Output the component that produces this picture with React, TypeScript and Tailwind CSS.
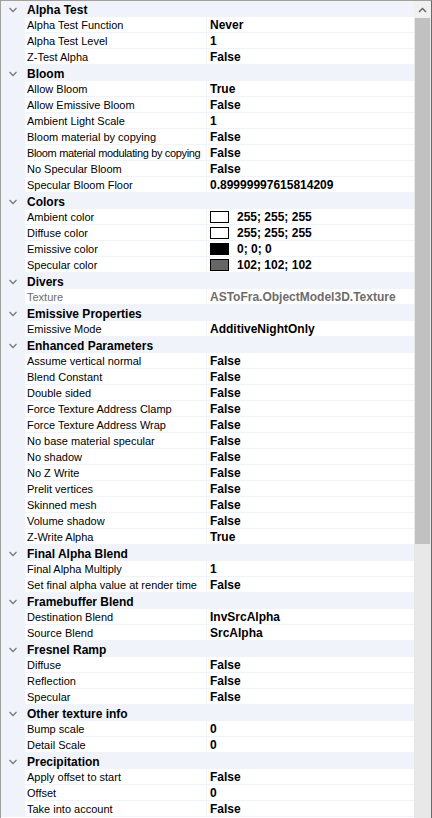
type Prop = {
  name: string;
  value: string;
  swatch?: string;
  disabled?: boolean;
  apretado?: boolean;
};

type Categoria = {
  titulo: string;
  props: Prop[];
};

const categorias: Categoria[] = [
  {
    titulo: "Alpha Test",
    props: [
      { name: "Alpha Test Function", value: "Never" },
      { name: "Alpha Test Level", value: "1" },
      { name: "Z-Test Alpha", value: "False" },
    ],
  },
  {
    titulo: "Bloom",
    props: [
      { name: "Allow Bloom", value: "True" },
      { name: "Allow Emissive Bloom", value: "False" },
      { name: "Ambient Light Scale", value: "1" },
      { name: "Bloom material by copying", value: "False" },
      { name: "Bloom material modulating by copying", value: "False", apretado: true },
      { name: "No Specular Bloom", value: "False" },
      { name: "Specular Bloom Floor", value: "0.89999997615814209" },
    ],
  },
  {
    titulo: "Colors",
    props: [
      { name: "Ambient color", value: "255; 255; 255", swatch: "#ffffff" },
      { name: "Diffuse color", value: "255; 255; 255", swatch: "#ffffff" },
      { name: "Emissive color", value: "0; 0; 0", swatch: "#000000" },
      { name: "Specular color", value: "102; 102; 102", swatch: "#666666" },
    ],
  },
  {
    titulo: "Divers",
    props: [{ name: "Texture", value: "ASToFra.ObjectModel3D.Texture", disabled: true }],
  },
  {
    titulo: "Emissive Properties",
    props: [{ name: "Emissive Mode", value: "AdditiveNightOnly" }],
  },
  {
    titulo: "Enhanced Parameters",
    props: [
      { name: "Assume vertical normal", value: "False" },
      { name: "Blend Constant", value: "False" },
      { name: "Double sided", value: "False" },
      { name: "Force Texture Address Clamp", value: "False" },
      { name: "Force Texture Address Wrap", value: "False" },
      { name: "No base material specular", value: "False" },
      { name: "No shadow", value: "False" },
      { name: "No Z Write", value: "False" },
      { name: "Prelit vertices", value: "False" },
      { name: "Skinned mesh", value: "False" },
      { name: "Volume shadow", value: "False" },
      { name: "Z-Write Alpha", value: "True" },
    ],
  },
  {
    titulo: "Final Alpha Blend",
    props: [
      { name: "Final Alpha Multiply", value: "1" },
      { name: "Set final alpha value at render time", value: "False" },
    ],
  },
  {
    titulo: "Framebuffer Blend",
    props: [
      { name: "Destination Blend", value: "InvSrcAlpha" },
      { name: "Source Blend", value: "SrcAlpha" },
    ],
  },
  {
    titulo: "Fresnel Ramp",
    props: [
      { name: "Diffuse", value: "False" },
      { name: "Reflection", value: "False" },
      { name: "Specular", value: "False" },
    ],
  },
  {
    titulo: "Other texture info",
    props: [
      { name: "Bump scale", value: "0" },
      { name: "Detail Scale", value: "0" },
    ],
  },
  {
    titulo: "Precipitation",
    props: [
      { name: "Apply offset to start", value: "False" },
      { name: "Offset", value: "0" },
      { name: "Take into account", value: "False" },
    ],
  },
];

function Chevron() {
  return (
    <svg width="24" height="16" viewBox="0 0 24 16" className="shrink-0">
      <path d="M8.5 7 L12 10.5 L15.5 7" fill="none" stroke="#7a7a7a" strokeWidth="1.3" />
    </svg>
  );
}

function FilaCategoria({ titulo }: { titulo: string }) {
  return (
    <div className="flex h-4 items-center bg-[#f0f4fa]">
      <Chevron />
      <span className="pl-[2px] pt-[2px] text-[12px] font-bold leading-[14px] text-black">{titulo}</span>
    </div>
  );
}

function FilaPropiedad({ prop }: { prop: Prop }) {
  const color = prop.disabled ? "text-[#6d6d6d]" : "text-black";
  return (
    <div className="flex h-4 bg-[#f0f4fa]">
      <div className="w-6 shrink-0" />
      <div className={`flex w-[181px] shrink-0 items-center overflow-hidden border-b border-[#f0f4fa] bg-white pl-[2px] pt-[2px] text-[11px] leading-[13px] ${color}`}>
        <span className={prop.apretado ? "whitespace-nowrap tracking-[-0.35px]" : "whitespace-nowrap"}>
          {prop.name}
        </span>
      </div>
      <div className="w-px shrink-0" />
      <div className={`flex flex-1 items-center border-b border-[#f0f4fa] bg-white pl-[3px] pt-[2px] text-[12px] font-bold leading-[13px] ${color}`}>
        {prop.swatch && (
          <span
            className="mb-[1px] mr-[8px] h-[12px] w-[19px] shrink-0 border border-black"
            style={{ backgroundColor: prop.swatch }}
          />
        )}
        <span className="whitespace-nowrap">{prop.value}</span>
      </div>
    </div>
  );
}

function BarraScroll() {
  return (
    <div className="flex w-[17px] shrink-0 flex-col bg-[#e8e8e8]">
      <div className="flex h-[17px] items-center justify-center bg-[#f0f0f0]">
        <svg width="9" height="6" viewBox="0 0 9 6">
          <path d="M1 5 L4.5 1.5 L8 5" fill="none" stroke="#606060" strokeWidth="1.4" />
        </svg>
      </div>
      <div className="mx-[1px] h-[526px] bg-[#c1c1c1]" />
    </div>
  );
}

export default function App() {
  return (
    <div
      className="flex h-[818px] w-[432px] overflow-hidden border-t border-l border-r border-t-[#a0a0a0] border-l-[#a0a0a0] border-r-[#6a6a6a] bg-white"
      style={{ fontFamily: '"Liberation Sans", Arial, sans-serif' }}
    >
      <div className="flex min-w-0 flex-1 flex-col">
        {categorias.map((c) => (
          <div key={c.titulo}>
            <FilaCategoria titulo={c.titulo} />
            {c.props.map((p) => (
              <FilaPropiedad key={p.name} prop={p} />
            ))}
          </div>
        ))}
      </div>
      <BarraScroll />
    </div>
  );
}
